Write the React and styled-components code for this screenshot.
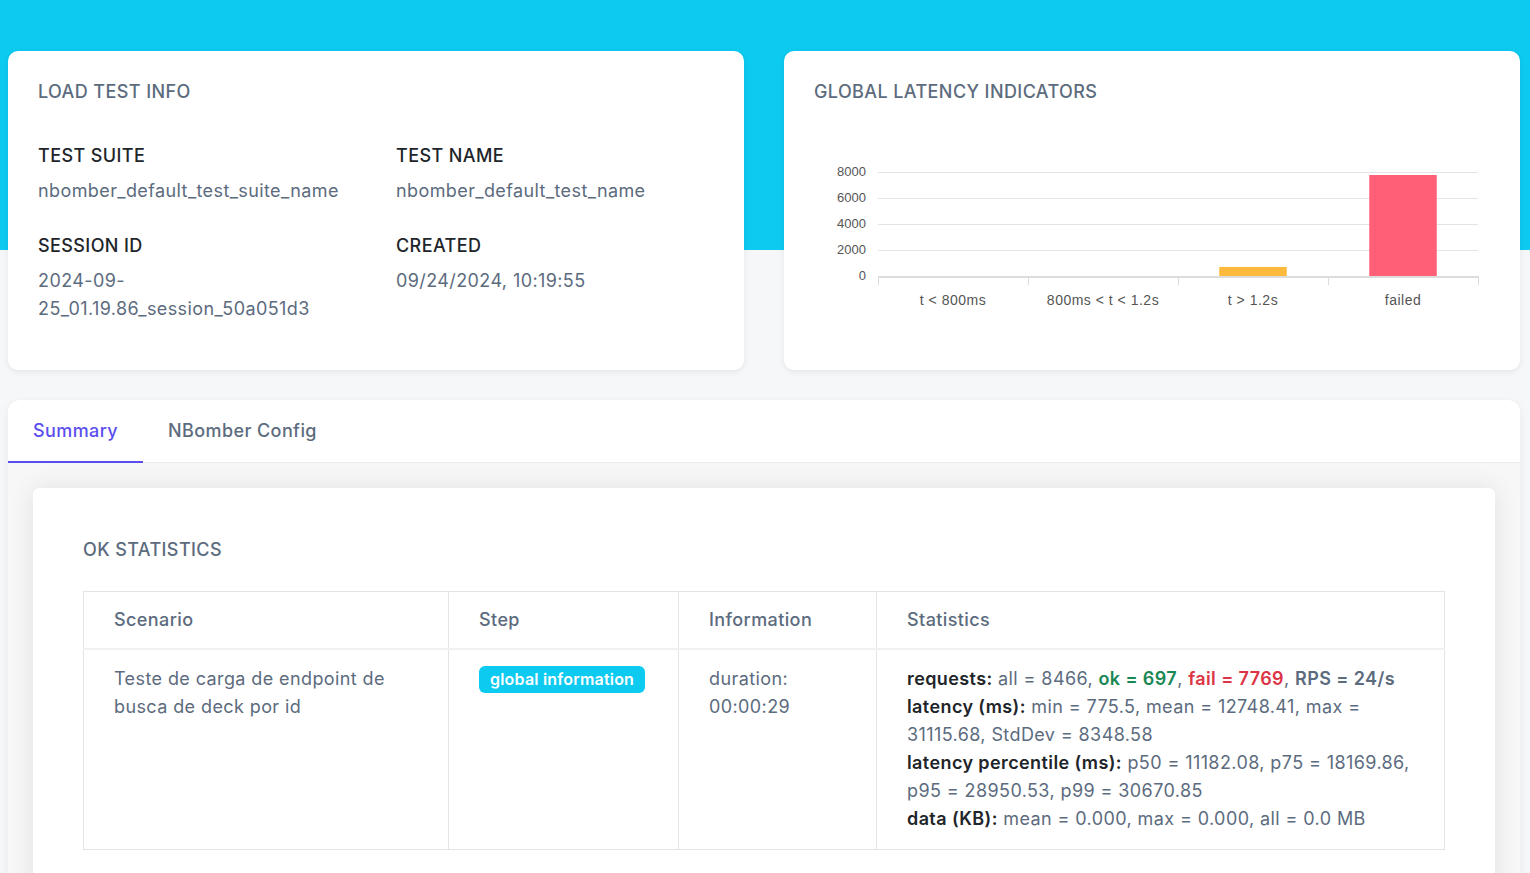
import React from "react";
import styled, { createGlobalStyle } from "styled-components";

const Global = createGlobalStyle`
  html, body { margin: 0; padding: 0; }
  body {
    font-family: Inter, "Noto Sans", sans-serif;
    letter-spacing: 0.4px;
    background: #f6f7f9;
    color: #212529;
  }
  * { box-sizing: border-box; }
`;

const Page = styled.div`
  min-height: 873px;
  background: linear-gradient(#0dcaf0 0, #0dcaf0 250px, #f6f7f9 250px);
  padding: 51px 10px 0 8px;
`;

const TopRow = styled.div`
  display: grid;
  grid-template-columns: 1fr 1fr;
  gap: 40px;
`;

const Card = styled.section`
  background: #fff;
  border-radius: 10px;
  box-shadow: 0 2px 6px rgba(30, 40, 60, 0.08);
  padding: 27px 30px 30px;
  min-height: 319px;
`;

const CardTitle = styled.h2`
  margin: 0 0 ${(p) => p.$gap ?? 35}px;
  font-size: 18px;
  line-height: 27px;
  font-weight: 500;
  color: #5c6b7e;
  text-transform: uppercase;
`;

const InfoGrid = styled.div`
  display: grid;
  grid-template-columns: 358px 1fr;
  row-gap: 25px;
`;

const Field = styled.div``;

const FieldLabel = styled.div`
  font-size: 18px;
  line-height: 27px;
  font-weight: 500;
  color: #212529;
  margin-top: 2px;
  margin-bottom: 8px;
`;

const FieldValue = styled.div`
  font-size: 18px;
  line-height: 28px;
  color: #5c6b7e;
  word-break: break-word;
  max-width: 310px;
`;

const ChartWrap = styled.div`
  margin-top: 47px;
`;

const TabsCard = styled.section`
  margin-top: 30px;
  background: #fff;
  border-radius: 12px 12px 0 0;
  box-shadow: 0 2px 8px rgba(30, 40, 60, 0.06);
  overflow: hidden;
`;

const TabList = styled.div`
  display: flex;
  border-bottom: 1px solid #ececee;
`;

const Tab = styled.button`
  font-family: inherit;
  letter-spacing: inherit;
  font-size: 18px;
  line-height: 27px;
  font-weight: 500;
  background: none;
  border: 0;
  border-bottom: 2px solid ${(p) => (p.$active ? "#5b4ef0" : "transparent")};
  margin-bottom: -1px;
  padding: 17px 25px 17px;
  color: ${(p) => (p.$active ? "#5b4ef0" : "#5c6b7e")};
  cursor: pointer;
`;

const TabPane = styled.div`
  padding: 25px 25px 0;
  background: #f7f7f7;
`;

const InnerCard = styled.div`
  background: #fff;
  border-radius: 6px 6px 0 0;
  box-shadow: 0 0 26px rgba(0, 0, 0, 0.09);
  padding: 48px 50px 50px;
`;

const Table = styled.table`
  width: 100%;
  border-collapse: collapse;
  table-layout: fixed;
  font-size: 18px;
  line-height: 28px;
`;

const Th = styled.th`
  text-align: left;
  font-weight: 500;
  color: #5c6b7e;
  padding: 14px 30px 14px;
  border: 1px solid #e2e4e8;
  border-bottom: 2px solid #f0f1f3;
`;

const Td = styled.td`
  vertical-align: top;
  color: #5c6b7e;
  padding: 15px 30px 16px;
  border: 1px solid #e2e4e8;
`;

const Badge = styled.span`
  display: inline-block;
  white-space: nowrap;
  background: #0dcaf0;
  color: #fff;
  font-weight: 600;
  font-size: 16px;
  letter-spacing: 0.2px;
  line-height: 27px;
  padding: 0 11px;
  border-radius: 6px;
  margin-top: 1px;
`;

const StatLine = styled.div``;

const Key = styled.b`
  font-weight: 600;
  color: #212529;
`;

const Strong = styled.b`
  font-weight: 600;
  color: ${(p) => p.$color};
`;

const bars = [
  { label: "t < 800ms", value: 0, color: "#ffb93d" },
  { label: "800ms < t < 1.2s", value: 0, color: "#ffb93d" },
  { label: "t > 1.2s", value: 697, color: "#ffb93d" },
  { label: "failed", value: 7769, color: "#ff6078" },
];

const chartFont = "'Liberation Sans', Arial, sans-serif";

function LatencyChart() {
  const x0 = 64;
  const x1 = 664;
  const base = 124;
  const scale = 13 / 1000;
  const ticks = [0, 2000, 4000, 6000, 8000];
  const w = (x1 - x0) / bars.length;
  return (
    <svg width="676" height="165" viewBox="0 0 676 165" style={{ display: "block", letterSpacing: 0 }}>
      {ticks.map((t) => {
        const y = base - t * scale;
        return (
          <g key={t}>
            {t !== 0 && <line x1={x0} x2={x1} y1={y + 0.5} y2={y + 0.5} stroke="#e4e4e4" strokeWidth="1" />}
            <text x="52" y={y + 4} textAnchor="end" fontFamily={chartFont} fontSize="13" fill="#555">
              {t}
            </text>
          </g>
        );
      })}
      {bars.map((b, i) => {
        const h = b.value * scale;
        const bw = w * 0.45;
        const cx = x0 + w * i + w / 2;
        return (
          <g key={b.label}>
            {h > 0 && <rect x={cx - bw / 2} y={base - h} width={bw} height={h} fill={b.color} />}
            <text
              x={cx}
              y={153}
              textAnchor="middle"
              fontFamily={chartFont}
              fontSize="14"
              letterSpacing="0.5"
              fill="#555"
            >
              {b.label}
            </text>
          </g>
        );
      })}
      <line x1={x0} x2={x1} y1={base + 1} y2={base + 1} stroke="#dcdcdc" strokeWidth="2" />
      {[0, 1, 2, 3, 4].map((i) => (
        <line key={i} x1={x0 + w * i + 0.5} x2={x0 + w * i + 0.5} y1={base} y2={base + 9} stroke="#dcdcdc" strokeWidth="1" />
      ))}
    </svg>
  );
}

export default function App() {
  return (
    <>
      <Global />
      <Page>
        <TopRow>
          <Card>
            <CardTitle>Load Test Info</CardTitle>
            <InfoGrid>
              <Field>
                <FieldLabel>TEST SUITE</FieldLabel>
                <FieldValue>nbomber_default_test_suite_name</FieldValue>
              </Field>
              <Field>
                <FieldLabel>TEST NAME</FieldLabel>
                <FieldValue>nbomber_default_test_name</FieldValue>
              </Field>
              <Field>
                <FieldLabel>SESSION ID</FieldLabel>
                <FieldValue>2024-09-25_01.19.86_session_50a051d3</FieldValue>
              </Field>
              <Field>
                <FieldLabel>CREATED</FieldLabel>
                <FieldValue>09/24/2024, 10:19:55</FieldValue>
              </Field>
            </InfoGrid>
          </Card>
          <Card>
            <CardTitle $gap={0}>Global Latency Indicators</CardTitle>
            <ChartWrap>
              <LatencyChart />
            </ChartWrap>
          </Card>
        </TopRow>

        <TabsCard>
          <TabList>
            <Tab $active>Summary</Tab>
            <Tab>NBomber Config</Tab>
          </TabList>
          <TabPane>
            <InnerCard>
              <CardTitle $gap={28}>OK Statistics</CardTitle>
              <Table>
                <colgroup>
                  <col style={{ width: "365px" }} />
                  <col style={{ width: "230px" }} />
                  <col style={{ width: "198px" }} />
                  <col />
                </colgroup>
                <thead>
                  <tr>
                    <Th>Scenario</Th>
                    <Th>Step</Th>
                    <Th>Information</Th>
                    <Th>Statistics</Th>
                  </tr>
                </thead>
                <tbody>
                  <tr>
                    <Td>Teste de carga de endpoint de busca de deck por id</Td>
                    <Td>
                      <Badge>global information</Badge>
                    </Td>
                    <Td>
                      duration:
                      <br />
                      00:00:29
                    </Td>
                    <Td>
                      <StatLine>
                        <Key>requests:</Key> all = 8466, <Strong $color="#198754">ok = 697</Strong>,{" "}
                        <Strong $color="#dc3545">fail = 7769</Strong>, <Strong $color="#5c6b7e">RPS = 24/s</Strong>
                      </StatLine>
                      <StatLine>
                        <Key>latency (ms):</Key> min = 775.5, mean = 12748.41, max = 31115.68, StdDev = 8348.58
                      </StatLine>
                      <StatLine>
                        <Key>latency percentile (ms):</Key> p50 = 11182.08, p75 = 18169.86, p95 = 28950.53, p99 = 30670.85
                      </StatLine>
                      <StatLine>
                        <Key>data (KB):</Key> mean = 0.000, max = 0.000, all = 0.0 MB
                      </StatLine>
                    </Td>
                  </tr>
                </tbody>
              </Table>
            </InnerCard>
          </TabPane>
        </TabsCard>
      </Page>
    </>
  );
}
